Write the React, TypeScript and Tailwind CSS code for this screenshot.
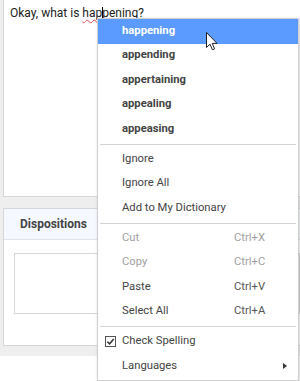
const SUGGESTIONS = ['happening', 'appending', 'appertaining', 'appealing', 'appeasing']

function Separator() {
  return <div className="h-[5.5px] px-[2px] pt-[2px]"><div className="h-px w-full bg-[#d4d4d4]" /></div>
}

function Item({ label, shortcut, disabled, bold, active, children }: {
  label: string
  shortcut?: string
  disabled?: boolean
  bold?: boolean
  active?: boolean
  children?: React.ReactNode
}) {
  return (
    <div
      className={`relative flex items-center h-[24.5px] pl-[24px] pr-3 ${active ? 'bg-[#5b9bff] text-white' : ''} ${
        disabled ? 'text-[#a0a0a0]' : active ? '' : 'text-[#444]'
      } ${bold ? 'font-bold' : ''}`}
    >
      {children}
      <span className="w-[112px] shrink-0">{label}</span>
      {shortcut && <span className={disabled ? 'text-[#a0a0a0]' : 'text-[#555]'}>{shortcut}</span>}
    </div>
  )
}

export default function App() {
  return (
    <div className="relative w-[300px] h-[381px] overflow-hidden bg-white" style={{ fontFamily: 'Roboto, "Liberation Sans", sans-serif' }}>
      {/* Text area */}
      <div className="bg-[#eeeeee] pb-[10px]">
        <div className="ml-[3px] h-[197px] bg-white border-l border-b border-[#d6d6d6] pl-[6px] pt-[4px] text-[12px] text-[#222]">
          Okay, what is{' '}
          <span className="underline decoration-wavy decoration-[#e05050] decoration-1 underline-offset-2">
            hap
            <span className="inline-block w-px h-[12px] bg-black align-[-2px] -mr-px" />
            pening
          </span>
          ?
        </div>
        {/* Dispositions panel */}
        <div className="ml-[3px] mt-[11px] h-[138px] bg-white border-l border-t border-b border-[#d6d6d6]">
          <div className="h-[31px] bg-[#f5f9ff] border-b border-[#dde3ea] flex items-center pl-[16px] text-[12px] font-bold text-[#444]">
            Dispositions
          </div>
          <div className="ml-[10px] mt-[13px] h-[61px] border border-[#d6d6d6]" />
        </div>
      </div>

      {/* Context menu */}
      <div className="absolute left-[97px] top-[18px] w-[202px] bg-white border border-[#cfcfcf] shadow-[1px_1px_3px_rgba(0,0,0,0.2)] text-[11.25px] pb-px">
        {SUGGESTIONS.map((s, i) => (
          <Item key={s} label={s} bold active={i === 0} />
        ))}
        <Separator />
        <Item label="Ignore" />
        <Item label="Ignore All" />
        <Item label="Add to My Dictionary" />
        <Separator />
        <Item label="Cut" shortcut="Ctrl+X" disabled />
        <Item label="Copy" shortcut="Ctrl+C" disabled />
        <Item label="Paste" shortcut="Ctrl+V" />
        <Item label="Select All" shortcut="Ctrl+A" />
        <Separator />
        <Item label="Check Spelling">
          <span className="absolute left-[7px] top-[6px] w-[11px] h-[11px] border border-[#555] bg-white flex items-center justify-center">
            <svg viewBox="0 0 10 10" className="w-[9px] h-[9px]">
              <path d="M1.5 5.2 L4 7.6 L8.6 2.2" fill="none" stroke="#333" strokeWidth="1.7" />
            </svg>
          </span>
        </Item>
        <div className="relative">
          <Item label="Languages" />
          <svg viewBox="0 0 4 6" className="absolute right-[11px] top-[9px] w-[4px] h-[6px]">
            <path d="M0 0 L4 3 L0 6 Z" fill="#333" />
          </svg>
        </div>
      </div>

      {/* Mouse pointer */}
      <svg viewBox="0 0 12 19" className="absolute left-[206px] top-[32px] w-[12px] h-[19px]">
        <path d="M0.5 0.5 L0.5 15.5 L4 12.2 L6.4 17.8 L8.6 16.9 L6.3 11.4 L11 11.4 Z" fill="white" stroke="#222" strokeWidth="1" strokeLinejoin="round" />
      </svg>
    </div>
  )
}
